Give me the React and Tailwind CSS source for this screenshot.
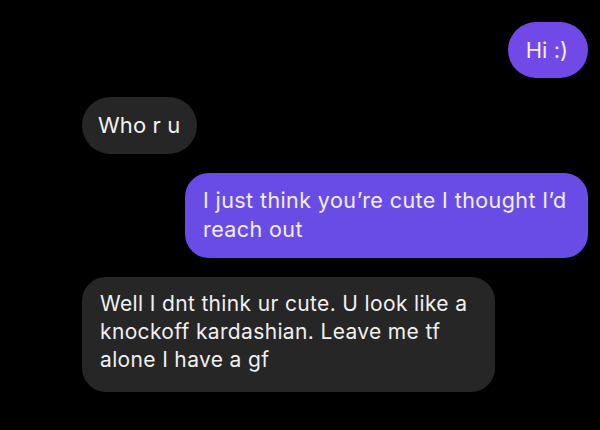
export default function App() {
  return (
    <div
      className="w-[600px] h-[430px] bg-black overflow-hidden flex flex-col gap-[19px] pt-[22px] pl-[82px] pr-[12px]"
      style={{ fontFamily: "Inter, 'Noto Sans', sans-serif" }}
    >
      <div className="self-end h-[56px] rounded-full bg-[#7049e7] pl-[18px] pr-[20px] flex items-center text-[22px] text-[#f3eefc]">
        Hi :)
      </div>

      <div className="self-start h-[57px] rounded-full bg-[#262626] pl-[16px] pr-[17px] flex items-center text-[22px] tracking-[0.1px] text-[#f2f2f2]">
        Who r u
      </div>

      <div className="self-end w-[403px] rounded-[24px] bg-[#694ce6] pl-[18px] pr-[8px] pt-[13px] pb-[14px] text-[21.5px] leading-[29px] tracking-[0.4px] text-[#f1eefb]">
        I just think you’re cute I thought I’d reach out
      </div>

      <div className="self-start w-[413px] rounded-[24px] bg-[#262626] pl-[18px] pr-[10px] pt-[13px] pb-[18px] text-[21px] leading-[28px] tracking-[0.35px] text-[#f0f0f0]">
        Well I dnt think ur cute. U look like a knockoff kardashian. Leave me tf alone I have a gf
      </div>
    </div>
  );
}
